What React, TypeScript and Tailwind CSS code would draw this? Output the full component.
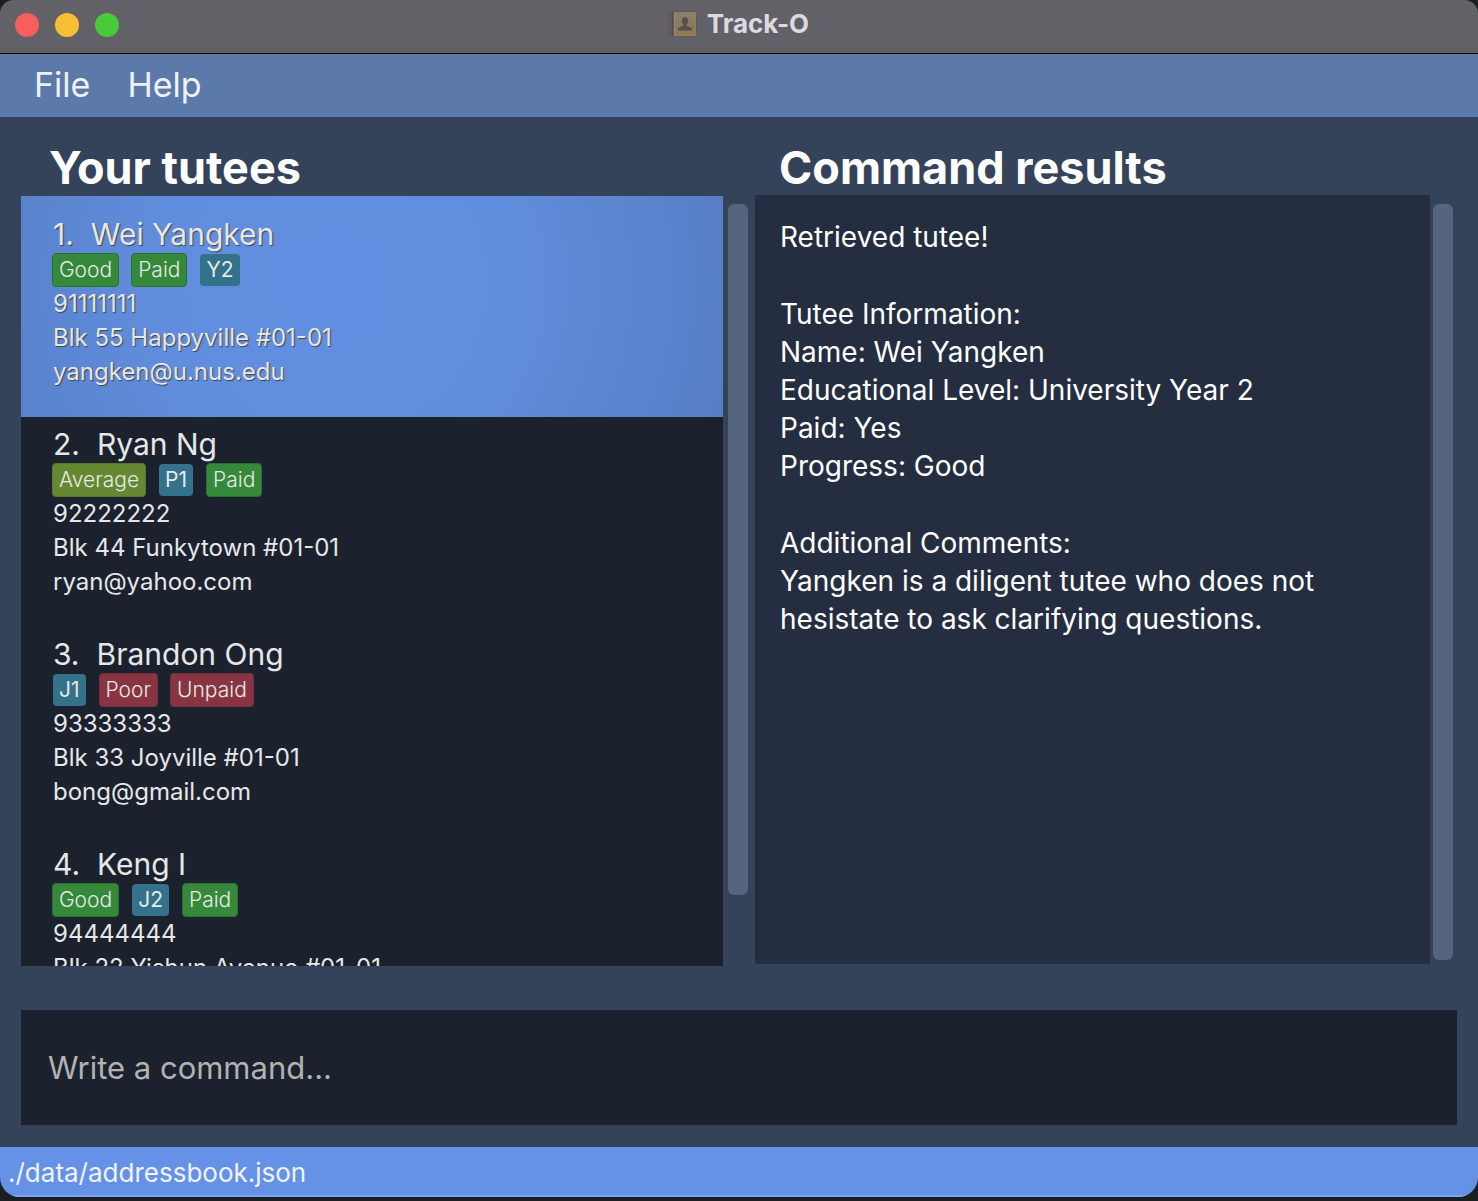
type TagKind = "green" | "olive" | "red" | "teal";

interface Tag {
  label: string;
  kind: TagKind;
}

interface Tutee {
  name: string;
  tags: Tag[];
  details: string[];
}

const TUTEES: Tutee[] = [
  {
    name: "Wei Yangken",
    tags: [
      { label: "Good", kind: "green" },
      { label: "Paid", kind: "green" },
      { label: "Y2", kind: "teal" },
    ],
    details: ["91111111", "Blk 55 Happyville #01-01", "yangken@u.nus.edu"],
  },
  {
    name: "Ryan Ng",
    tags: [
      { label: "Average", kind: "olive" },
      { label: "P1", kind: "teal" },
      { label: "Paid", kind: "green" },
    ],
    details: ["92222222", "Blk 44 Funkytown #01-01", "ryan@yahoo.com"],
  },
  {
    name: "Brandon Ong",
    tags: [
      { label: "J1", kind: "teal" },
      { label: "Poor", kind: "red" },
      { label: "Unpaid", kind: "red" },
    ],
    details: ["93333333", "Blk 33 Joyville #01-01", "bong@gmail.com"],
  },
  {
    name: "Keng I",
    tags: [
      { label: "Good", kind: "green" },
      { label: "J2", kind: "teal" },
      { label: "Paid", kind: "green" },
    ],
    details: ["94444444", "Blk 22 Yishun Avenue #01-01"],
  },
];

const RESULT: string[][] = [
  ["Retrieved tutee!"],
  [
    "Tutee Information:",
    "Name: Wei Yangken",
    "Educational Level: University Year 2",
    "Paid: Yes",
    "Progress: Good",
  ],
  ["Additional Comments:", "Yangken is a diligent tutee who does not hesistate to ask clarifying questions."],
];

const TAG_STYLES: Record<TagKind, string> = {
  green: "h-[34px] border border-[#2b7031] bg-[#36893b] px-[6px] font-light",
  olive: "h-[34px] border border-[#587a2c] bg-[#678833] px-[6px] font-light",
  red: "h-[34px] border border-[#74303f] bg-[#893442] px-[6px] font-light",
  teal: "mx-px h-8 bg-[#34718a] px-[6px]",
};

function AddressBookIcon() {
  return (
    <svg viewBox="0 0 28 26" className="h-[26px] w-7" aria-hidden="true">
      <rect x="0.5" y="0.5" width="27" height="25" rx="1.5" fill="#59534f" />
      <rect x="1" y="1" width="4" height="24" rx="1" fill="#625a5c" />
      <path d="M3.500 1v24" stroke="#55504f" strokeWidth="1" />
      <rect x="5" y="1" width="22" height="24" rx="1" fill="#8b7a5b" />
      <rect x="5" y="1" width="22" height="9" rx="1" fill="#8a7f6a" />
      <path d="M5.500 1v24" stroke="#98876a" strokeWidth="1" />
      <path d="M6 24.500h20.500V1.500" fill="none" stroke="#98804f" strokeWidth="1" />
      <path
        d="M16 6c-2 0-3.200 1.300-3.200 3.400 0 1.800.7 3.200 1.700 4v1.300c-1.500.9-5.100 1.200-5.600 3.300v1.500h14.200V18c-.5-2.100-4.100-2.400-5.600-3.300v-1.300c1-.8 1.700-2.200 1.700-4C19.200 7.300 18 6 16 6z"
        fill="#585048"
      />
    </svg>
  );
}

function TuteeCard({ tutee, index, selected }: { tutee: Tutee; index: number; selected: boolean }) {
  return (
    <li
      aria-current={selected}
      className={
        selected
          ? "bg-[radial-gradient(circle_at_45%_40%,#628fe1_0%,#608ddd_45%,#567dc4_100%)] px-8 pt-5 pb-7 text-[#e8e6e3] [text-shadow:1px_1px_1px_#3c4654]"
          : "px-8 pt-[9px] pb-7 text-[#e6e7e9]"
      }
    >
      <h3 className="flex gap-[17px] text-[30px] leading-[37px]">
        <span>{index}.</span>
        <span>{tutee.name}</span>
      </h3>
      <ul className="-ml-px flex h-[34px] items-center gap-3">
        {tutee.tags.map((tag) => (
          <li
            key={tag.label}
            className={`flex items-center rounded-[4px] text-[21px] leading-8 text-[#e4ebe6] [text-shadow:none] ${TAG_STYLES[tag.kind]}`}
          >
            {tag.label}
          </li>
        ))}
      </ul>
      {tutee.details.map((detail) => (
        <p key={detail} className="text-[24px] leading-[34px]">
          {detail}
        </p>
      ))}
    </li>
  );
}

export default function App() {
  return (
    <div className="h-screen bg-[#1c1f22] pb-1 font-['Inter',sans-serif]">
      <div className="flex h-full flex-col overflow-hidden rounded-t-[14px] rounded-b-[20px] bg-[#35435a]">
        <header className="grid h-[54px] shrink-0 grid-cols-[1fr_auto_1fr] items-center border-b border-black bg-[#626167] px-[15px] pb-1">
          <div className="flex gap-4">
            <button aria-label="Close" className="size-6 rounded-full bg-[#f65f5c]" />
            <button aria-label="Minimize" className="size-6 rounded-full bg-[#f7bf35]" />
            <button aria-label="Zoom" className="size-6 rounded-full bg-[#49cb39]" />
          </div>
          <div className="flex items-center gap-[10px] pb-[2px]">
            <AddressBookIcon />
            <h1 className="text-[26px] leading-8 font-bold text-[#dcdae1]">Track-O</h1>
          </div>
        </header>

        <nav className="flex h-[65px] shrink-0 items-center gap-[37px] border-b-2 border-[#30405a] bg-[#5b7aaa] px-[34px] pb-[2px] text-[34px] leading-[44px] text-[#eef1f7]">
          <button>File</button>
          <button>Help</button>
        </nav>

        <main className="flex min-h-0 flex-1 flex-col px-[21px] pt-[22px] pb-[22px]">
          <div className="grid min-h-0 flex-1 grid-cols-[727fr_702fr] gap-[7px]">
            <section className="flex min-h-0 min-w-0 flex-col">
              <h2 className="pb-px pl-7 text-[45px] leading-[54px] font-bold text-white">Your tutees</h2>
              <div className="flex min-h-0 flex-1 gap-[5px]">
                <ul className="min-w-0 flex-1 overflow-hidden bg-[#1b222d]">
                  {TUTEES.map((tutee, i) => (
                    <TuteeCard key={tutee.name} tutee={tutee} index={i + 1} selected={i === 0} />
                  ))}
                </ul>
                <div className="w-5 pt-2 pb-[71px]">
                  <div className="h-full rounded-md bg-[#55657e]" />
                </div>
              </div>
            </section>
            <section className="flex min-h-0 min-w-0 flex-col pr-1">
              <h2 className="pl-6 text-[45px] leading-[54px] font-bold text-white">Command results</h2>
              <div className="flex min-h-0 flex-1 gap-[3px]">
                <div className="mb-[2px] flex min-w-0 flex-1 flex-col gap-[39px] overflow-hidden bg-[#242e40] py-[23px] pr-16 pl-[25px] text-[28px] leading-[38px] text-white">
                  {RESULT.map((block) => (
                    <div key={block[0]}>
                      {block.map((line) => (
                        <p key={line}>{line}</p>
                      ))}
                    </div>
                  ))}
                </div>
                <div className="w-5 pt-[9px] pb-[6px]">
                  <div className="h-full rounded-md bg-[#55657e]" />
                </div>
              </div>
            </section>
          </div>
          <input
            type="text"
            aria-label="Command"
            placeholder="Write a command..."
            className="mt-11 h-[115px] w-full shrink-0 bg-[#1b222d] px-[27px] text-[31px] text-white outline-none placeholder:text-[#b2b2b2] placeholder:opacity-100"
          />
        </main>

        <footer className="h-[50px] shrink-0 border-b-2 border-[#7ba4ef] bg-[#6592e6] px-2 text-[26px] leading-[52px] text-[#f0f4fc]">
          ./data/addressbook.json
        </footer>
      </div>
    </div>
  );
}
